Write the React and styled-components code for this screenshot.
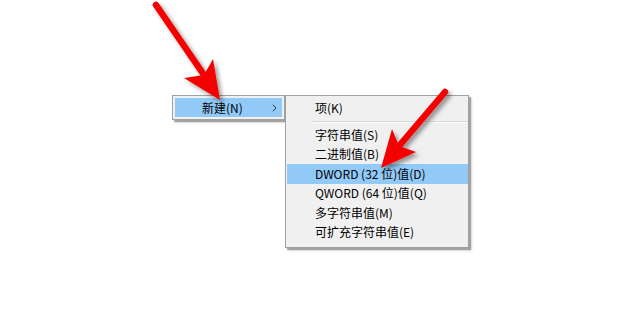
import styled, { createGlobalStyle } from "styled-components";

const GlobalStyle = createGlobalStyle`
  body {
    margin: 0;
    background: #ffffff;
    font-family: "Microsoft YaHei UI", "Noto Sans CJK SC", "Noto Sans", sans-serif;
  }
`;

const subItems = [
  { label: "字符串值(S)" },
  { label: "二进制值(B)" },
  { label: "DWORD (32 位)值(D)", active: true },
  { label: "QWORD (64 位)值(Q)" },
  { label: "多字符串值(M)" },
  { label: "可扩充字符串值(E)" },
];

const Arrow = ({ start, notch, tip, left, right }) => (
  <g filter="url(#shadow)">
    <line
      x1={start[0]}
      y1={start[1]}
      x2={notch[0]}
      y2={notch[1]}
      stroke="#f50000"
      strokeWidth="6.5"
      strokeLinecap="round"
    />
    <polygon
      points={`${tip} ${right} ${notch} ${left}`}
      fill="#f50000"
    />
  </g>
);

export default function App() {
  return (
    <>
      <GlobalStyle />
      <Stage>
        <Menu $width={113} $pad="2px 2px">
          <Item $active $h={19} $indent={27}>
            新建(N)
            <Chevron viewBox="0 0 5 8">
              <path d="M0.8 0.8 L4 4 L0.8 7.2" fill="none" stroke="#333" strokeWidth="1" />
            </Chevron>
          </Item>
        </Menu>
        <Menu $width={184} $pad="2px 0 5px 1px">
          <Item $h={20} $indent={28}>项(K)</Item>
          <Separator />
          {subItems.map((it) => (
            <Item key={it.label} $active={it.active} $h={19.5} $indent={28}>
              {it.label}
            </Item>
          ))}
        </Menu>
        <ArrowLayer viewBox="0 0 620 309">
          <defs>
            <filter id="shadow" x="-30%" y="-30%" width="160%" height="160%">
              <feDropShadow dx="3" dy="3" stdDeviation="2" floodColor="#000" floodOpacity="0.4" />
            </filter>
          </defs>
          <Arrow
            start={[156, 5]}
            notch={[204, 75]}
            tip={[220, 100]}
            left={[184, 78]}
            right={[213, 59]}
          />
          <Arrow
            start={[445, 92]}
            notch={[399, 146]}
            tip={[381, 168]}
            left={[392, 129]}
            right={[416, 152]}
          />
        </ArrowLayer>
      </Stage>
    </>
  );
}

const Stage = styled.div`
  position: relative;
  width: 620px;
  height: 309px;
  overflow: hidden;
  box-sizing: border-box;
  padding: 95px 0 0 172px;
  display: flex;
  align-items: flex-start;
`;

const Menu = styled.ul`
  list-style: none;
  margin: 0;
  width: ${({ $width }) => $width}px;
  box-sizing: border-box;
  padding: ${({ $pad }) => $pad};
  background: #f0f0f0;
  border: 1px solid #a0a0a0;
  box-shadow: 2px 2px 1px rgba(0, 0, 0, 0.28), 3px 3px 2px rgba(0, 0, 0, 0.12);
`;

const Item = styled.li`
  position: relative;
  display: flex;
  align-items: center;
  height: ${({ $h }) => $h}px;
  padding-left: ${({ $indent }) => $indent}px;
  background: ${({ $active }) => ($active ? "#91c9f7" : "transparent")};
  color: #000;
  font-size: 12px;
  line-height: 1;
  white-space: nowrap;
`;

const Chevron = styled.svg`
  position: absolute;
  right: 5px;
  top: 6px;
  width: 5px;
  height: 8px;
`;

const Separator = styled.li`
  height: 1px;
  margin: 3px 0 2px 26px;
  background: #d7d7d7;
  border-bottom: 1px solid #fcfcfc;
`;

const ArrowLayer = styled.svg`
  position: absolute;
  left: 0;
  top: 0;
  width: 620px;
  height: 309px;
  pointer-events: none;
`;
